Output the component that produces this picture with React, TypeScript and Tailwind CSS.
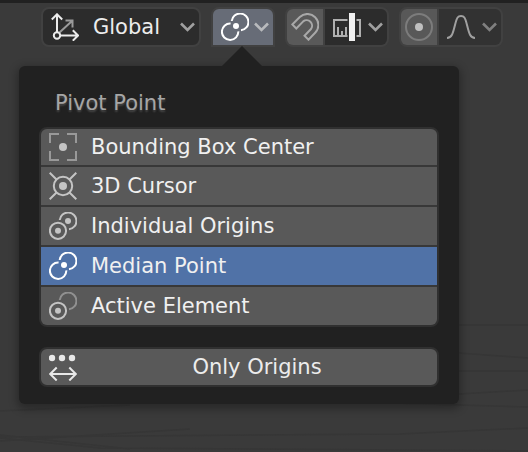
import { useState, type ReactNode } from 'react';

function Icon({ children, className = '' }: { children: ReactNode; className?: string }) {
  return (
    <svg viewBox="0 0 28 28" fill="none" stroke="currentColor" strokeWidth="2" aria-hidden="true" className={`size-7 shrink-0 ${className}`}>
      {children}
    </svg>
  );
}

function Chevron({ className = '' }: { className?: string }) {
  return (
    <svg viewBox="0 0 15 10" fill="none" stroke="currentColor" strokeWidth="2.6" aria-hidden="true" className={`h-[10px] w-[15px] shrink-0 ${className}`}>
      <path d="M1 1.5 7.5 8 14 1.5" />
    </svg>
  );
}

const OrientationIcon = () => (
  <Icon>
    <path d="M8.5 19.5 21 8M14.5 7.5H21.5V14.5" stroke="#999999" />
    <path d="M6 19V1.5M.8 6.5 6 1.3 11.2 6.5M9 22.5H27M21.8 17.3 27 22.5 21.8 27.7" />
    <circle cx="6" cy="22.5" r="3.2" />
  </Icon>
);

const MedianIcon = () => (
  <Icon>
    <path d="M10.7 8A8.4 8.4 0 1 1 20 17.3" />
    <path d="M9.6 10.6A8.2 8.2 0 1 0 17.3 18.4" />
    <circle cx="15" cy="13" r="3" fill="currentColor" stroke="none" />
  </Icon>
);

const BoundsIcon = () => (
  <Icon>
    <path d="M1 10V1H10M18 1H27V10M27 18V27H18M10 27H1V18" stroke="#999999" />
    <circle cx="14" cy="14" r="4" fill="currentColor" stroke="none" />
  </Icon>
);

const CursorIcon = () => (
  <Icon>
    <circle cx="14" cy="14" r="9.2" />
    <circle cx="14" cy="14" r="4" fill="currentColor" stroke="none" />
    <path d="M.7.7 7.5 7.5M27.3.7 20.5 7.5M.7 27.3 7.5 20.5M27.3 27.3 20.5 20.5" />
  </Icon>
);

const IndividualIcon = () => (
  <Icon>
    <path d="M10.7 8A8.4 8.4 0 1 1 20 17.3" />
    <circle cx="9" cy="18.8" r="8.1" />
    <circle cx="9" cy="18.8" r="3" fill="currentColor" stroke="none" />
    <circle cx="19" cy="9" r="3" fill="currentColor" stroke="none" />
  </Icon>
);

const ActiveIcon = () => (
  <Icon>
    <path d="M10.7 8A8.4 8.4 0 1 1 20 17.3" stroke="#909090" />
    <circle cx="9" cy="18.8" r="8.1" />
    <circle cx="9" cy="18.8" r="3" fill="currentColor" stroke="none" />
  </Icon>
);

const OnlyOriginsIcon = () => (
  <Icon className="text-[#e8e8e8]">
    <g fill="currentColor" stroke="none">
      <circle cx="3" cy="5" r="3.2" />
      <circle cx="13" cy="5" r="3.2" />
      <circle cx="23" cy="5" r="3.2" />
    </g>
    <path d="M1.2 21H26.8M7.7 14.5 1.2 21 7.7 27.5M20.3 14.5 26.8 21 20.3 27.5" />
  </Icon>
);

const MagnetIcon = () => (
  <Icon className="text-[#a8a8a8]">
    <path d="M1.3 11.5 8.8 4A11 11 0 0 1 24.4 19.5L17.5 26.7 13.5 22.7 20 16A5.5 5.5 0 0 0 12.2 8.4L5.3 15.5Z" />
  </Icon>
);

const IncrementIcon = () => (
  <Icon className="text-[#b0b0b0]">
    <path d="M14.5 7H1V23H14.5M5 23V14M9 23V18M13 23V14" />
    <path d="M23.5 7H27V23H23.5" />
    <rect x="16" y="0" width="6" height="28" fill="#f0f0f0" stroke="none" />
  </Icon>
);

const ProportionalIcon = () => (
  <Icon>
    <circle cx="14" cy="14" r="13" stroke="#7c7c7c" />
    <circle cx="14" cy="14" r="4" fill="#bfbfbf" stroke="none" />
  </Icon>
);

const FalloffIcon = () => (
  <Icon className="text-[#a0a0a0]">
    <path d="M0 25C5 25 6 20 8 12S11 3 14 3S18 4 20 12S23 25 28 25" />
  </Icon>
);

const pivots = [
  { name: 'Bounding Box Center', icon: <BoundsIcon />, height: 'h-9' },
  { name: '3D Cursor', icon: <CursorIcon />, height: 'h-[38px]' },
  { name: 'Individual Origins', icon: <IndividualIcon />, height: 'h-[38px]' },
  { name: 'Median Point', icon: <MedianIcon />, height: 'h-[38px]' },
  { name: 'Active Element', icon: <ActiveIcon />, height: 'h-[38px]' },
];

const group = 'flex h-10 shrink-0 overflow-hidden border-2 border-[#414141]';

export default function App() {
  const [pivot, setPivot] = useState('Median Point');
  const [onlyOrigins, setOnlyOrigins] = useState(false);

  return (
    <div className="relative isolate min-h-screen overflow-hidden border-t-3 border-[#212121] bg-[#3a3a3a] font-['DejaVu_Sans',sans-serif] text-[21px] leading-7 text-[#ececec]">
      <svg viewBox="0 0 528 449" fill="none" stroke="#363636" strokeWidth="1.5" aria-hidden="true" className="absolute inset-0 -z-10 h-full w-full">
        <path d="M0 434 400 431 528 425M0 408 130 402M0 432 130 446M455 390 394 400 528 404M459 322H528M459 350 528 355M459 368H528M459 391 528 387M0 435 100 445 528 448M0 438 190 426" />
      </svg>

      <header className="flex gap-[10px] pt-1 pl-[41px]">
        <label className={`${group} items-center rounded-[8px] bg-[#2c2c2c] pr-1 pl-2`}>
          <OrientationIcon />
          <select aria-label="Transform orientation" className="-mr-[15px] ml-[14px] w-[102px] appearance-none bg-transparent outline-none">
            <option>Global</option>
            <option>Local</option>
            <option>Normal</option>
          </select>
          <Chevron className="pointer-events-none text-[#a0a0a0]" />
        </label>

        <button type="button" aria-label="Pivot point" aria-expanded="true" className={`${group} items-center gap-[5px] rounded-t-[8px] bg-[#676c77] pr-1 pl-2 text-white`}>
          <MedianIcon />
          <Chevron className="text-[#b8babd]" />
        </button>

        <div className={`${group} rounded-[8px] bg-[#414141]`}>
          <button type="button" aria-label="Snap" className="flex w-9 items-center justify-center bg-[#595959]">
            <MagnetIcon />
          </button>
          <button type="button" aria-label="Snap to" className="ml-0.5 flex items-center gap-[7px] bg-[#2c2c2c] pr-1 pl-2">
            <IncrementIcon />
            <Chevron className="text-[#a0a0a0]" />
          </button>
        </div>

        <div className={`${group} rounded-[8px] bg-[#414141]`}>
          <button type="button" aria-label="Proportional editing" className="flex w-9 items-center justify-center bg-[#585858]">
            <ProportionalIcon />
          </button>
          <button type="button" aria-label="Proportional falloff" className="ml-0.5 flex items-center gap-[7px] bg-[#323232] pr-1 pl-2">
            <FalloffIcon />
            <Chevron className="text-[#808080]" />
          </button>
        </div>
      </header>

      <section aria-label="Pivot Point" className="relative mt-[19px] ml-[19px] w-[440px] max-w-full rounded-[6px] bg-[#212121] px-5 pt-[23px] pb-[17px] shadow-[0_3px_8px_2px_rgba(0,0,0,0.3)]">
        <svg viewBox="0 0 40 20" aria-hidden="true" className="absolute -top-5 left-[203px] h-5 w-10 fill-[#212121]">
          <path d="M0 20 20 0 40 20Z" />
        </svg>
        <h2 className="mb-[10px] pl-4 text-[#a6a6a6] [text-shadow:0_2px_2px_rgba(150,150,150,0.35)]">Pivot Point</h2>

        <div role="radiogroup" aria-label="Pivot Point" className="flex flex-col gap-0.5 overflow-hidden rounded-[8px] border-2 border-[#303030] bg-[#383838]">
          {pivots.map((p) => (
            <label key={p.name} className={`flex items-center bg-[#595959] pl-2 text-[#c4c4c4] has-checked:bg-[#5072a7] has-checked:text-white ${p.height}`}>
              <input type="radio" name="pivot" value={p.name} checked={pivot === p.name} onChange={() => setPivot(p.name)} className="sr-only" />
              {p.icon}
              <span className="ml-[14px] text-[#f0f0f0]">{p.name}</span>
            </label>
          ))}
        </div>

        <button type="button" aria-pressed={onlyOrigins} onClick={() => setOnlyOrigins(!onlyOrigins)} className="mt-5 flex h-10 w-full items-center rounded-[8px] border-2 border-[#303030] bg-[#595959] pl-2">
          <OnlyOriginsIcon />
          <span className="flex-1 text-center">Only Origins</span>
        </button>
      </section>
    </div>
  );
}
